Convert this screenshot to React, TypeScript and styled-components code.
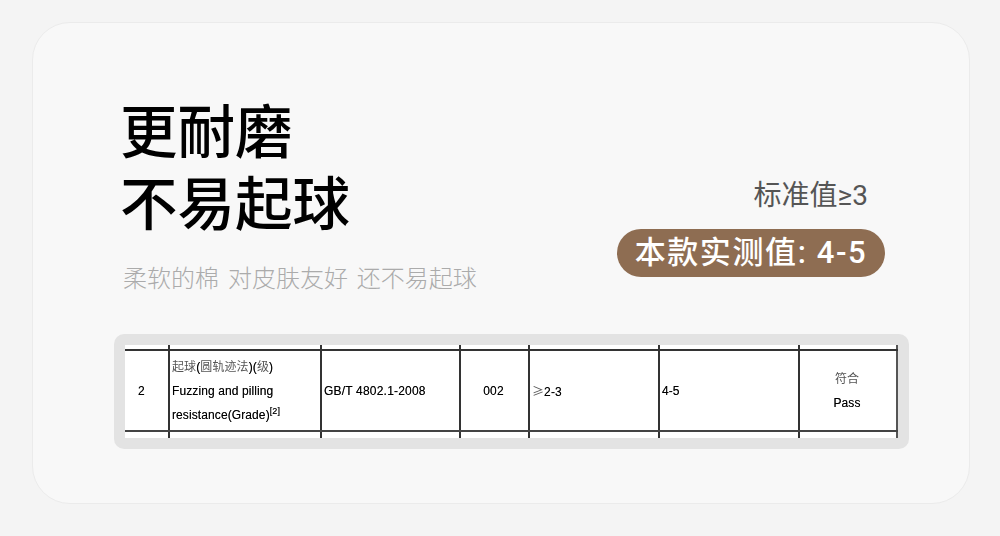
import React from "react";
import styled, { createGlobalStyle } from "styled-components";

const Global = createGlobalStyle`
  html, body { margin: 0; padding: 0; background: #f4f4f4; }
  body { width: 1000px; height: 536px; overflow: hidden; font-family: "Noto Sans CJK SC", "Noto Sans", sans-serif; }
`;

const Page = styled.div`
  width: 1000px;
  height: 536px;
  padding: 22px 30px 32px 32px;
  box-sizing: border-box;
  background: #f4f4f4;
`;

const Card = styled.main`
  height: 482px;
  box-sizing: border-box;
  padding: 69px 60px 54px 81px;
  border: 1px solid #ebebeb;
  border-radius: 38px;
  background: #f8f8f8;
  display: flex;
  flex-direction: column;
`;

const Top = styled.section`
  display: flex;
  justify-content: space-between;
  align-items: flex-start;
  height: 242px;
  padding-left: 6px;
  box-sizing: border-box;
`;

const Heading = styled.div`
  display: flex;
  flex-direction: column;
`;

const Title = styled.h1`
  margin: 0;
  font-size: 57.5px;
  line-height: 72px;
  font-weight: 500;
  color: #000;
`;

const Subtitle = styled.p`
  margin: 24px 0 0 3px;
  font-size: 24px;
  line-height: 34px;
  font-weight: 300;
  word-spacing: 3.6px;
  color: #ababab;
  white-space: pre;
`;

const Results = styled.div`
  display: flex;
  flex-direction: column;
  align-items: flex-end;
  margin-top: 84px;
  margin-right: 24px;
`;

const Standard = styled.div`
  font-family: Roboto, "Noto Sans CJK SC", sans-serif;
  font-size: 28px;
  line-height: 40px;
  font-weight: 400;
  color: #555;
  margin-right: 17px;
  margin-bottom: 13px;
`;

const Pill = styled.div`
  width: 268px;
  height: 48px;
  box-sizing: border-box;
  border-radius: 24px;
  background: #8e6d52;
  color: #fff;
  font-family: Roboto, "Noto Sans CJK SC", sans-serif;
  font-size: 31px;
  line-height: 48px;
  font-weight: 500;
  letter-spacing: 1.6px;
  text-align: center;
  white-space: pre;
`;

const Frame = styled.section`
  width: 773px;
  padding: 11px;
  background: #e3e3e3;
  border-radius: 10px;
`;

const Table = styled.div`
  background: #fff;
  display: flex;
  flex-direction: column;
  font-family: "Liberation Sans", Arial, sans-serif;
  font-size: 12px;
  letter-spacing: 0.1px;
  color: #000;
  text-shadow: 0 0 0.5px rgba(0, 0, 0, 0.6);
  filter: blur(0.25px);
`;

const Row = styled.div<{ $h: number; $main?: boolean }>`
  display: grid;
  grid-template-columns: 43px 152px 139px 69px 130px 140px 100px;
  height: ${(p) => p.$h}px;
  box-sizing: border-box;
  ${(p) => (p.$main ? "border-top: 2px solid #333; border-bottom: 2px solid #444;" : "")}
`;

const Cell = styled.div<{ $center?: boolean; $last?: boolean; $pad?: number }>`
  border-left: 2px solid #333;
  ${(p) => (p.$last ? "border-right: 2px solid #555;" : "")}
  display: flex;
  flex-direction: column;
  justify-content: center;
  align-items: ${(p) => (p.$center ? "center" : "flex-start")};
  padding-left: ${(p) => (p.$center ? 0 : 2)}px;
  padding-right: ${(p) => p.$pad ?? 0}px;
  box-sizing: border-box;
  white-space: nowrap;
  &:first-child { border-left: none; }
`;

const Line = styled.span`
  line-height: 24px;
`;

const Wide = styled.span`
  letter-spacing: 0.2px;
`;

const Cjk = styled.span`
  font-family: "Noto Sans CJK SC", sans-serif;
  font-weight: 400;
  color: #555;
  text-shadow: none;
`;

const Sup = styled.sup`
  font-size: 9px;
  line-height: 0;
`;

const columns = [0, 1, 2, 3, 4, 5, 6];

function Stub({ h }: { h: number }) {
  return (
    <Row $h={h}>
      {columns.map((i) => (
        <Cell key={i} $last={i === 6} />
      ))}
    </Row>
  );
}

export default function App() {
  return (
    <Page>
      <Global />
      <Card>
        <Top>
          <Heading>
            <Title>更耐磨</Title>
            <Title>不易起球</Title>
            <Subtitle>柔软的棉 对皮肤友好 还不易起球</Subtitle>
          </Heading>
          <Results>
            <Standard>标准值≥3</Standard>
            <Pill>本款实测值: 4-5</Pill>
          </Results>
        </Top>
        <Frame>
          <Table>
            <Stub h={4} />
            <Row $h={83} $main>
              <Cell $center $pad={10}>2</Cell>
              <Cell>
                <Line><Cjk>起球</Cjk>(<Cjk>圆轨迹法</Cjk>)(<Cjk>级</Cjk>)</Line>
                <Line>Fuzzing and pilling</Line>
                <Line>resistance(Grade)<Sup>[2]</Sup></Line>
              </Cell>
              <Cell><Wide>GB/T 4802.1-2008</Wide></Cell>
              <Cell $center $pad={2}>002</Cell>
              <Cell><span><Cjk>≥</Cjk>2-3</span></Cell>
              <Cell>4-5</Cell>
              <Cell $center $last $pad={2}>
                <Line><Cjk>符合</Cjk></Line>
                <Line>Pass</Line>
              </Cell>
            </Row>
            <Stub h={6} />
          </Table>
        </Frame>
      </Card>
    </Page>
  );
}
